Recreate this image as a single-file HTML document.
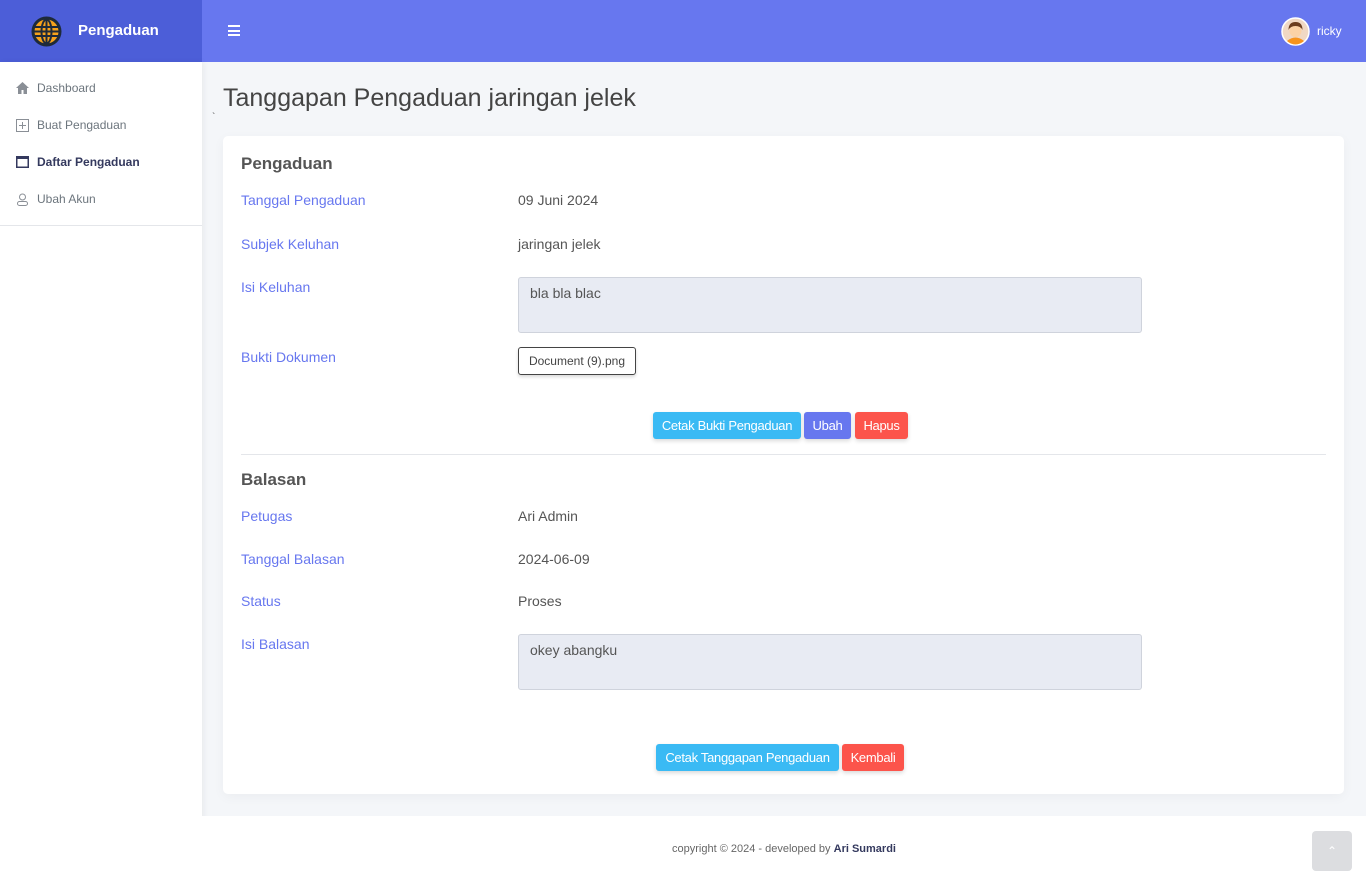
<!DOCTYPE html>
<html><head><meta charset="utf-8"><style>
*{box-sizing:border-box;margin:0;padding:0}
body{width:1366px;height:885px;overflow:hidden;background:#f4f6f9;font-family:"Liberation Sans",sans-serif;position:relative}
.brand{position:absolute;left:0;top:0;width:202px;height:62px;background:#4c5ed8;color:#fff}
.top{position:absolute;left:202px;top:0;right:0;height:62px;background:#6777ef;color:#fff}
.side{position:absolute;left:0;top:62px;width:202px;height:823px;background:#fff;box-shadow:2px 0 6px rgba(0,0,0,.05)}
.side .m{position:absolute;left:16px;font-size:12px;color:#6c757d;display:flex;align-items:center}
.side .m svg{margin-right:8px}
.card{position:absolute;left:223px;top:136px;width:1121px;height:658px;background:#fff;border-radius:5px;box-shadow:0 3px 12px rgba(0,0,0,.04)}
.h{position:absolute;left:18px;font-size:17px;font-weight:bold;color:#555}
.l{position:absolute;left:18px;font-size:14px;color:#6777ef}
.v{position:absolute;left:295px;font-size:14px;color:#555}
.ta{position:absolute;left:295px;width:624px;height:56px;background:#e8ebf3;border:1px solid #cfd3dc;border-radius:3px;padding:7px 11px;font-size:14px;color:#555}
.btn{position:absolute;height:27px;line-height:27px;color:#fff;font-size:13px;text-align:center;border-radius:3px;box-shadow:0 2px 4px rgba(0,0,0,.15);letter-spacing:-.3px;white-space:nowrap}
.i{background:#3abaf4}.p{background:#6777ef}.d{background:#fc544b}
.foot{position:absolute;left:202px;top:816px;right:0;height:69px;background:#fff;font-size:11px;color:#666;text-align:center;line-height:66px}
</style></head><body>
<div class="brand">
<svg style="position:absolute;left:31px;top:16px" width="31" height="31" viewBox="0 0 31 31"><circle cx="15.5" cy="15.5" r="15" fill="#1e2a3a"/><circle cx="15.5" cy="15.5" r="12" fill="#f7a21b"/><g stroke="#1e2a3a" stroke-width="2" fill="none"><ellipse cx="15.5" cy="15.5" rx="5" ry="12"/><line x1="15.5" y1="3" x2="15.5" y2="28"/><line x1="4" y1="11" x2="27" y2="11"/><line x1="3.5" y1="15.5" x2="27.5" y2="15.5"/><line x1="4" y1="20" x2="27" y2="20"/></g></svg>
<div style="position:absolute;left:78px;top:22px;font-size:15px;font-weight:bold">Pengaduan</div></div>
<div class="top">
<div style="position:absolute;left:26px;top:25px;width:12px;height:11px;border-top:2px solid #fff;border-bottom:2px solid #fff"><div style="margin-top:2.5px;height:2px;background:#fff"></div></div>
<svg style="position:absolute;left:1079px;top:17px" width="29" height="29" viewBox="0 0 29 29"><circle cx="14.5" cy="14.5" r="13.5" fill="#f0d8c4" stroke="#fff" stroke-width="1.5"/><path d="M6 24q8.5-7 17 0q-4 3.5-8.5 3.5T6 24z" fill="#f7941d"/><circle cx="14.5" cy="14" r="6" fill="#fbd2a6"/><path d="M7.5 13q0-8 7-8t7 8q-2-4-7-4t-7 4z" fill="#6b3d1e"/></svg>
<div style="position:absolute;left:1115px;top:24px;font-size:12px">ricky</div></div>
<div class="side">
<div class="m" style="top:19px"><svg width="13" height="12" viewBox="0 0 13 12"><path d="M6.5 0L0 6h2v6h3.5V8h2v4H11V6h2z" fill="#8a8f96"/></svg>Dashboard</div>
<div class="m" style="top:56px"><svg width="13" height="13" viewBox="0 0 13 13" fill="none" stroke="#8a8f96"><rect x=".5" y=".5" width="12" height="12"/><path d="M6.5 3v7M3 6.5h7"/></svg>Buat Pengaduan</div>
<div class="m" style="top:93px;color:#34395e;font-weight:bold"><svg width="13" height="12" viewBox="0 0 13 12"><rect x=".75" y=".75" width="11.5" height="10.5" fill="none" stroke="#34395e" stroke-width="1.5"/><rect x="0" y="0" width="13" height="3" fill="#34395e"/></svg>Daftar Pengaduan</div>
<div class="m" style="top:130px"><svg width="13" height="13" viewBox="0 0 13 13" fill="none" stroke="#8a8f96"><circle cx="6.5" cy="4" r="3"/><rect x="1.5" y="8.5" width="10" height="4" rx="2"/></svg>Ubah Akun</div>
<div style="position:absolute;top:163px;left:0;width:202px;border-top:1px solid #e4e6ea"></div>
</div>
<div style="position:absolute;left:223px;top:84px;font-size:25px;color:#444">Tanggapan Pengaduan jaringan jelek</div>
<div style="position:absolute;left:212px;top:112px;font-size:10px;color:#555">`</div>
<div class="card">
<div class="h" style="top:18px">Pengaduan</div>
<div class="l" style="top:56px">Tanggal Pengaduan</div><div class="v" style="top:56px">09 Juni 2024</div>
<div class="l" style="top:100px">Subjek Keluhan</div><div class="v" style="top:100px">jaringan jelek</div>
<div class="l" style="top:143px">Isi Keluhan</div><div class="ta" style="top:141px">bla bla blac</div>
<div class="l" style="top:213px">Bukti Dokumen</div>
<div style="position:absolute;left:295px;top:211px;width:118px;height:28px;text-align:center;border:1px solid #444;border-radius:3px;font-size:12px;line-height:26px;color:#444;box-shadow:0 2px 3px rgba(0,0,0,.15)">Document (9).png</div>
<div class="btn i" style="left:430px;top:276px;width:148px">Cetak Bukti Pengaduan</div>
<div class="btn p" style="left:581px;top:276px;width:47px">Ubah</div>
<div class="btn d" style="left:632px;top:276px;width:53px">Hapus</div>
<div style="position:absolute;left:18px;top:318px;width:1085px;border-top:1px solid #e4e6ea"></div>
<div class="h" style="top:334px">Balasan</div>
<div class="l" style="top:372px">Petugas</div><div class="v" style="top:372px">Ari Admin</div>
<div class="l" style="top:415px">Tanggal Balasan</div><div class="v" style="top:415px">2024-06-09</div>
<div class="l" style="top:457px">Status</div><div class="v" style="top:457px">Proses</div>
<div class="l" style="top:500px">Isi Balasan</div><div class="ta" style="top:498px">okey abangku</div>
<div class="btn i" style="left:433px;top:608px;width:183px">Cetak Tanggapan Pengaduan</div>
<div class="btn d" style="left:619px;top:608px;width:62px">Kembali</div>
</div>
<div class="foot">copyright © 2024 - developed by <b style="color:#34395e">Ari Sumardi</b></div>
<div style="position:absolute;left:1312px;top:831px;width:40px;height:40px;background:#dcdde0;border-radius:4px;color:#fff;text-align:center;line-height:40px;font-size:12px">&#8963;</div>
</body></html>
